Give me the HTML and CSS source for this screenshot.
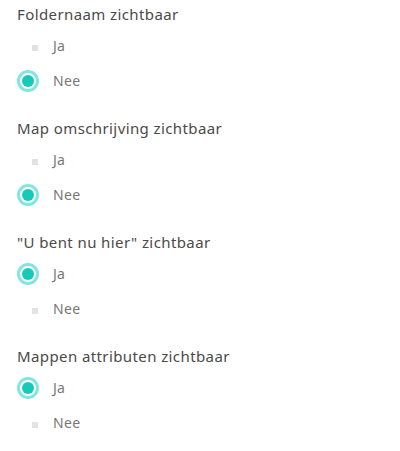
FILE: index.html
```html
<!DOCTYPE html>
<html lang="nl">
<head>
  <meta charset="UTF-8">
  <meta name="viewport" content="width=device-width, initial-scale=1.0">
  <title>Weergave instellingen</title>
  <link rel="stylesheet" href="styles.css">
</head>
<body>
  <!-- Foldernaam -->
  <div class="setting">
    <p class="setting-title">Foldernaam zichtbaar</p>
    <label class="option"><input type="radio" name="foldernaam"><span class="dot"></span>Ja</label>
    <label class="option"><input type="radio" name="foldernaam" checked><span class="dot"></span>Nee</label>
  </div>

  <!-- Map omschrijving -->
  <div class="setting">
    <p class="setting-title">Map omschrijving zichtbaar</p>
    <label class="option"><input type="radio" name="omschrijving"><span class="dot"></span>Ja</label>
    <label class="option"><input type="radio" name="omschrijving" checked><span class="dot"></span>Nee</label>
  </div>

  <!-- U bent nu hier -->
  <div class="setting">
    <p class="setting-title">"U bent nu hier" zichtbaar</p>
    <label class="option"><input type="radio" name="hier" checked><span class="dot"></span>Ja</label>
    <label class="option"><input type="radio" name="hier"><span class="dot"></span>Nee</label>
  </div>

  <!-- Mappen attributen -->
  <div class="setting">
    <p class="setting-title">Mappen attributen zichtbaar</p>
    <label class="option"><input type="radio" name="attributen" checked><span class="dot"></span>Ja</label>
    <label class="option"><input type="radio" name="attributen"><span class="dot"></span>Nee</label>
  </div>
</body>
</html>
```

FILE: styles.css
```css
/* Base */
body {
  font-family: "Noto Sans", Arial, sans-serif;
  margin: 0;
  padding: 0 0 0 17px;
  background-color: #fff;
  color: #444;
}

/* Setting group */
.setting {
  margin-bottom: 16px;
}

.setting-title {
  margin: 0;
  height: 28px;
  font-size: 15px;
  line-height: 28px;
  letter-spacing: 0.4px;
  color: #4a4a4a;
}

/* Radio options */
.option {
  display: flex;
  align-items: center;
  height: 35px;
  font-size: 14px;
  letter-spacing: 0.3px;
  color: #777;
  cursor: pointer;
}

.option input {
  display: none;
}

.dot {
  position: relative;
  width: 22px;
  height: 22px;
  margin-right: 14px;
  box-sizing: border-box;
}

.dot::after {
  content: "";
  position: absolute;
  left: 15px;
  top: 10px;
  width: 6px;
  height: 6px;
  background-color: #e2e2e2;
}

.option input:checked + .dot {
  border: 3px solid #7fe6e0;
  border-radius: 50%;
  background-color: #fff;
}

.option input:checked + .dot::after {
  left: 2px;
  top: 2px;
  width: 12px;
  height: 12px;
  border-radius: 50%;
  background-color: #17c9b8;
}
```
